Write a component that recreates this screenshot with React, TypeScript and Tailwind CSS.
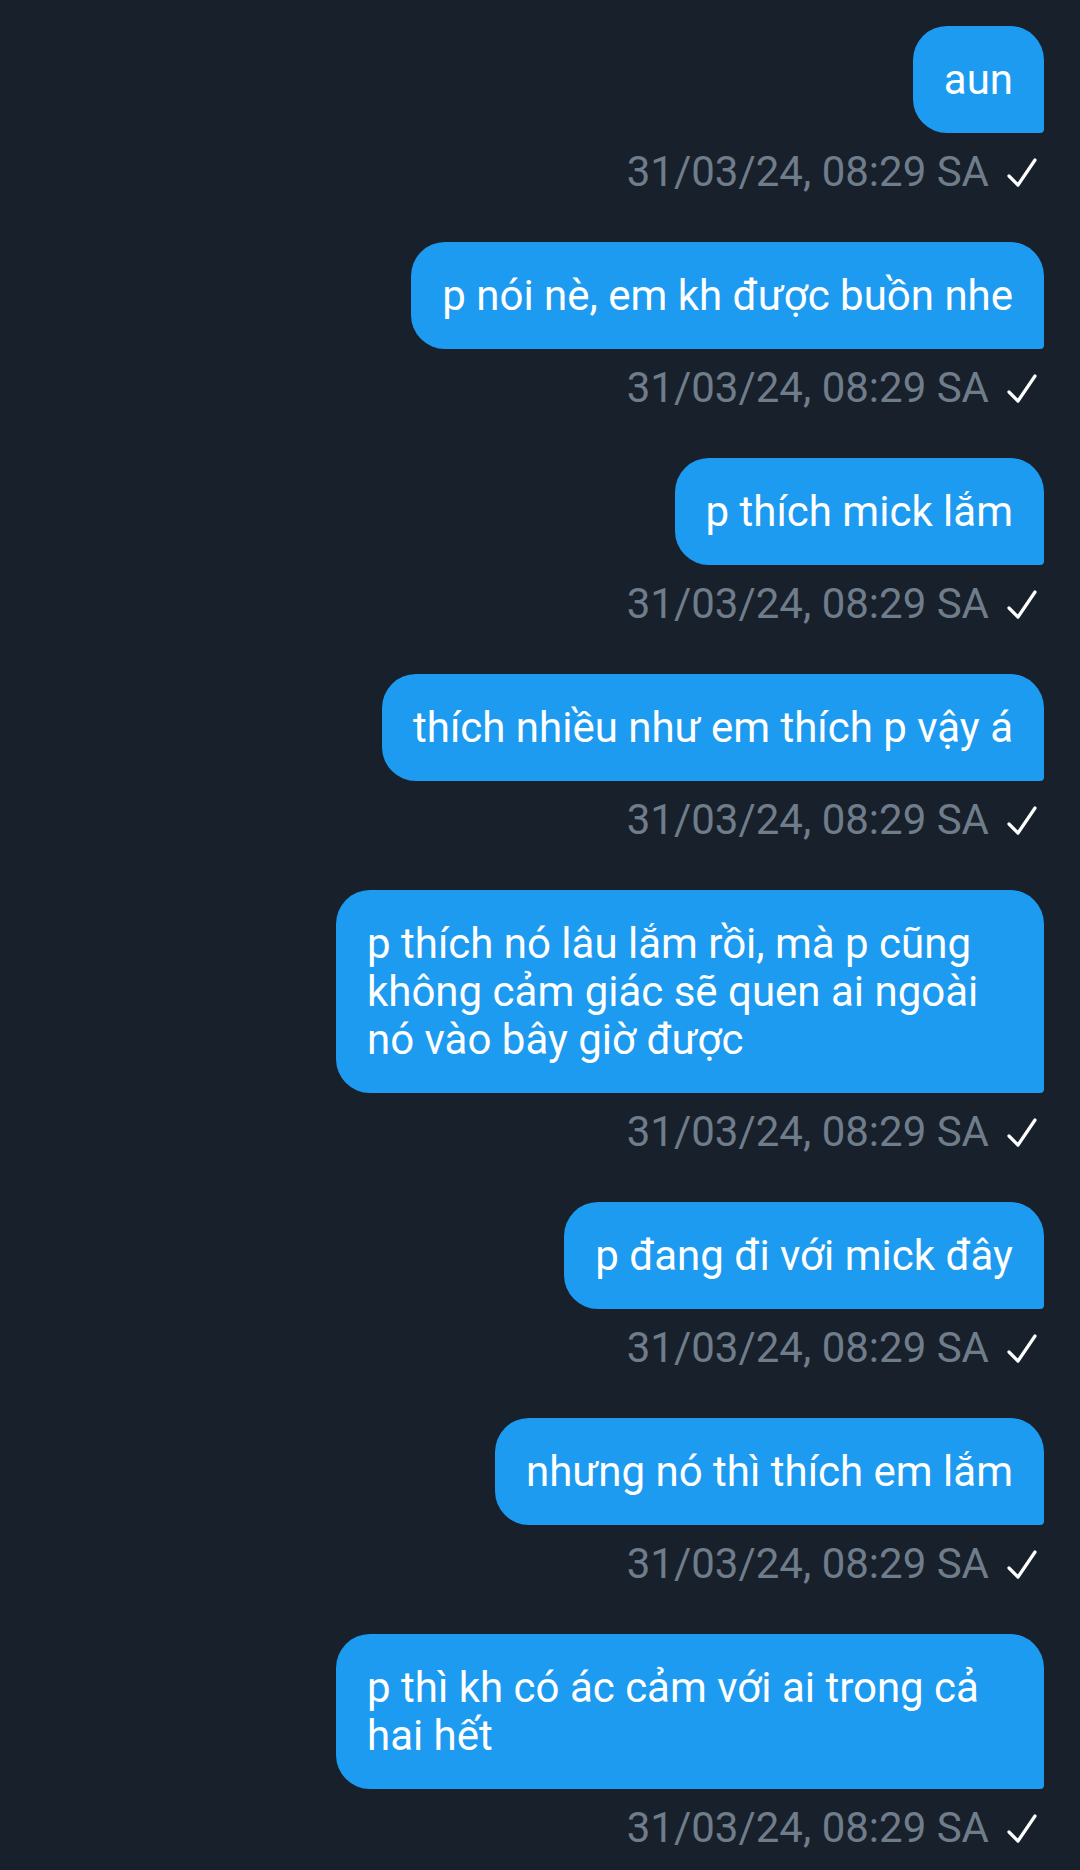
import React from "react";

const messages = [
  "aun",
  "p nói nè, em kh được buồn nhe",
  "p thích mick lắm",
  "thích nhiều như em thích p vậy á",
  "p thích nó lâu lắm rồi, mà p cũng không cảm giác sẽ quen ai ngoài nó vào bây giờ được",
  "p đang đi với mick đây",
  "nhưng nó thì thích em lắm",
  "p thì kh có ác cảm với ai trong cả hai hết",
];

function Check() {
  return (
    <svg width="32" height="30" viewBox="0 0 32 30" className="block">
      <polyline
        points="3,18 12,27 29,2"
        fill="none"
        stroke="#ffffff"
        strokeWidth="3.2"
        strokeLinecap="round"
        strokeLinejoin="round"
      />
    </svg>
  );
}

export default function App() {
  return (
    <div
      className="w-[1080px] h-[1870px] overflow-hidden bg-[#18202b] pt-[26px] pr-[36px] flex flex-col items-end"
      style={{ fontFamily: "Roboto, 'Noto Sans', sans-serif" }}
    >
      {messages.map((m, i) => (
        <div key={i} className="flex flex-col items-end mb-[46px]">
          <div className="max-w-[708px] bg-[#1d9bf0] text-white text-[42px] leading-[48px] px-[31px] py-[29.5px] rounded-[34px] rounded-br-[4px]">
            {m}
          </div>
          <div className="mt-[15px] flex items-center h-[48px] text-[42px] leading-[48px] text-[#6f7d8b] pr-[6px]">
            <span>31/03/24, 08:29 SA</span>
            <span className="ml-[17px] mt-[2px]">
              <Check />
            </span>
          </div>
        </div>
      ))}
    </div>
  );
}
